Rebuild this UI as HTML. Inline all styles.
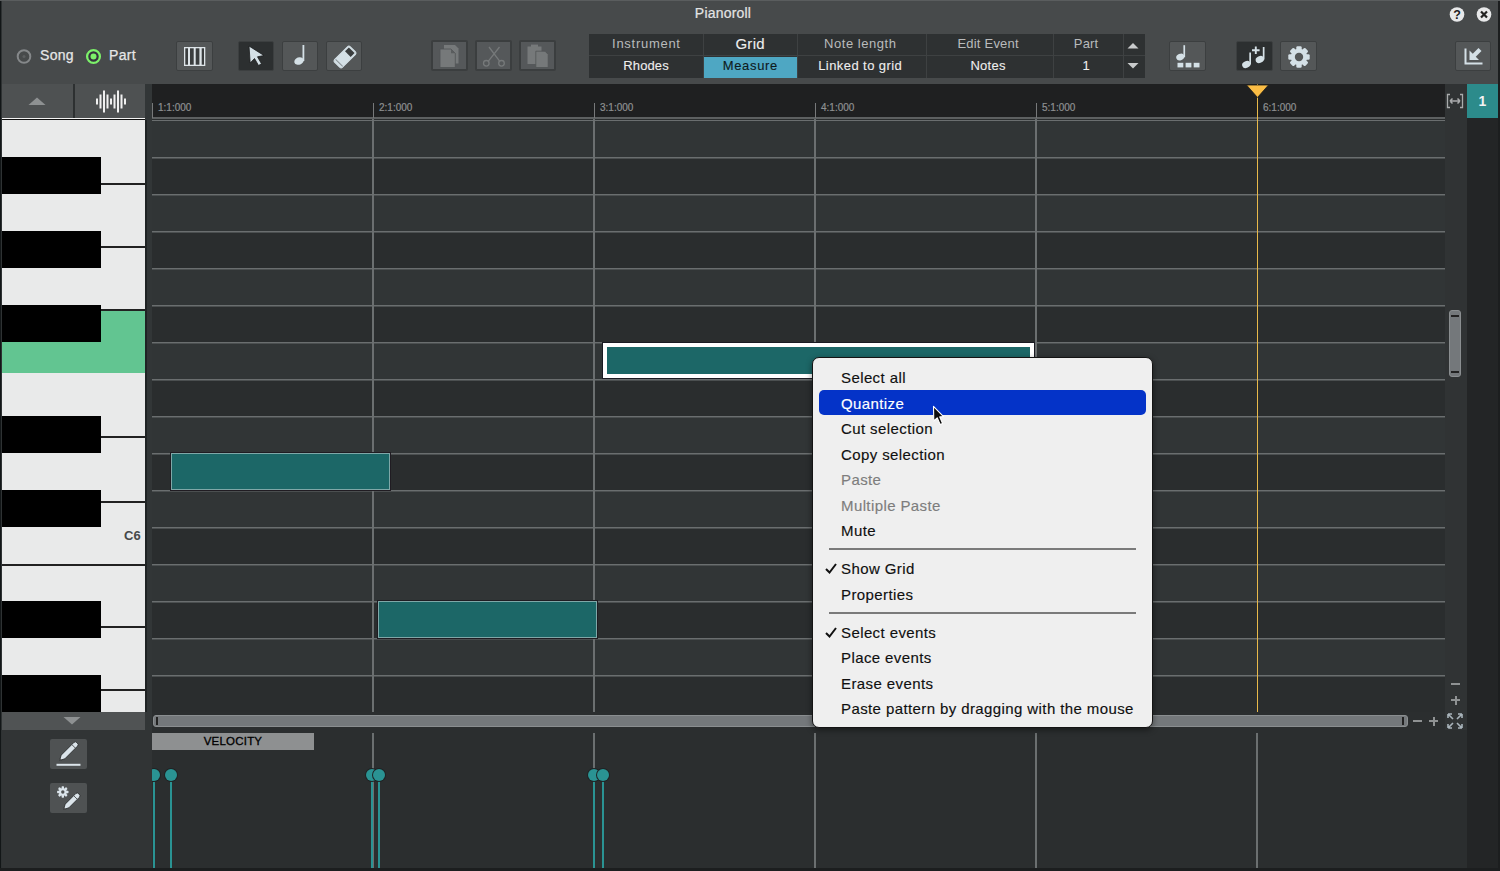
<!DOCTYPE html><html><head><meta charset="utf-8"><title>Pianoroll</title><style>

*{margin:0;padding:0;box-sizing:border-box}
html,body{width:1500px;height:871px;overflow:hidden;background:#474a4b;font-family:"Liberation Sans", sans-serif}
.abs{position:absolute}
.btn{position:absolute;background:#545758;border:1px solid #3c3f40;border-radius:2px}
.btn.on{background:#2c2f30}
.btn.dis{background:#55585a;border:2px solid #3b3e3f}
.mi{position:absolute;left:28px;font-size:15px;letter-spacing:0.4px;color:#111;white-space:nowrap;-webkit-text-stroke:0.15px currentColor}
.mi.g{color:#7b7b7b}

</style></head><body>
<div class="abs" style="left:0;top:0;width:1500px;height:871px;background:#474a4b"></div>
<div class="abs" style="left:0;top:0;width:1px;height:871px;background:#121617"></div>
<div class="abs" style="left:1px;top:0;width:1px;height:871px;background:#2e3233"></div>
<div class="abs" style="left:1498px;top:0;width:2px;height:871px;background:#1c1e1f"></div>
<div class="abs" style="left:0;top:0;width:1500px;height:1px;background:#5a5d5e"></div>
<div class="abs" style="left:0;top:5px;width:1446px;text-align:center;font-size:14px;letter-spacing:0.2px;color:#e4e4e4;-webkit-text-stroke:0.2px #e4e4e4">Pianoroll</div>
<svg class="abs" style="left:1449px;top:6px" width="44" height="17" viewBox="0 0 44 17">
<circle cx="8" cy="8.5" r="7.3" fill="#e8e9ea"/>
<text x="8" y="13.3" font-size="12.5" font-weight="bold" text-anchor="middle" fill="#1d1d1d" font-family="Liberation Sans">?</text>
<circle cx="35" cy="8.5" r="7.3" fill="#e8e9ea"/>
<path d="M32 5.5 L38 11.5 M38 5.5 L32 11.5" stroke="#222" stroke-width="2.2"/>
</svg>
<svg class="abs" style="left:14px;top:47px" width="90" height="20" viewBox="0 0 90 20">
<circle cx="10" cy="9.5" r="6.3" fill="none" stroke="#85888a" stroke-width="2"/><circle cx="10" cy="9.5" r="1.5" fill="#5c5f60"/>
<circle cx="79.5" cy="9.5" r="6.4" fill="#35323d" stroke="#7cf06a" stroke-width="2.3"/>
<circle cx="79.5" cy="9.5" r="3" fill="#7cf06a"/>
</svg>
<div class="abs" style="left:40px;top:47px;font-size:14px;letter-spacing:0.3px;color:#e6e6e6;-webkit-text-stroke:0.25px #e6e6e6">Song</div>
<div class="abs" style="left:109px;top:47px;font-size:14px;letter-spacing:0.3px;color:#e6e6e6;-webkit-text-stroke:0.25px #e6e6e6">Part</div>
<div class="btn " style="left:176px;top:41px;width:37px;height:30px"><svg class="abs" style="left:6px;top:4px" width="23" height="21" viewBox="0 0 23 21">
<rect x="1" y="1" width="21.3" height="19" fill="#dde4e8"/>
<rect x="2.3" y="2.3" width="2.7" height="16.4" fill="#3a3d3e"/><rect x="7" y="2.3" width="3.7" height="16.4" fill="#3a3d3e"/>
<rect x="12.7" y="2.3" width="3.7" height="16.4" fill="#3a3d3e"/><rect x="18.7" y="2.3" width="2.3" height="16.4" fill="#3a3d3e"/>
</svg></div>
<div class="btn on" style="left:238px;top:41px;width:36px;height:30px"><svg class="abs" style="left:9px;top:3px" width="18" height="22" viewBox="0 0 18 22">
<path d="M1 1 L2.2 18 L6.5 13.5 L10.5 20.5 L13.5 18.8 L9.5 11.8 L16 10.5 Z" fill="#d4e0e6" stroke="#1a1c1d" stroke-width="0.8"/>
</svg></div>
<div class="btn " style="left:282px;top:41px;width:36px;height:30px"><svg class="abs" style="left:10px;top:2px" width="16" height="22" viewBox="0 0 16 22">
<ellipse cx="6" cy="17" rx="4.8" ry="3.6" fill="#d4e0e6" transform="rotate(-20 6 17)"/>
<rect x="9.5" y="1" width="1.8" height="16" fill="#d4e0e6"/>
</svg></div>
<div class="btn " style="left:326px;top:41px;width:36px;height:30px"><svg class="abs" style="left:6px;top:3px" width="24" height="24" viewBox="0 0 24 24">
<g transform="rotate(-45 12 12)"><rect x="1" y="6.5" width="22" height="11" rx="2" fill="#d4e0e6" stroke="#d4e0e6" stroke-width="1"/>
<rect x="16" y="8" width="5.5" height="8" fill="#3a3d3e"/><rect x="3.2" y="7" width="1" height="10" fill="#8a9296"/></g>
</svg></div>
<div class="btn dis" style="left:431px;top:40px;width:37px;height:31px"></div>
<div class="btn dis" style="left:475px;top:40px;width:37px;height:31px"></div>
<div class="btn dis" style="left:519px;top:40px;width:37px;height:31px"></div>
<svg class="abs" style="left:420px;top:38px" width="140" height="34" viewBox="420 38 140 34">
<g fill="#76797a">
<path d="M444 45 H455 L458.5 48.5 V63.5 H444 Z"/>
<path d="M440 49 H451 L455.3 53.3 V67.5 H440 Z" stroke="#515455" stroke-width="0.8"/>
<path d="M451 49 V53.3 H455.3" fill="#5a5d5e"/>
</g>
<g stroke="#76797a" stroke-width="1.3" fill="none">
<path d="M489 47 L499.8 61.3 M499.5 47 L488.2 61.3"/>
<circle cx="486.3" cy="63.3" r="2.8"/><circle cx="501.5" cy="63.3" r="2.8"/>
</g>
<g fill="#76797a">
<rect x="527.5" y="46.5" width="14" height="17.5"/><rect x="531" y="44.6" width="7" height="3"/>
<path d="M535.8 51.2 H545 L548.2 54.4 V67.5 H535.8 Z" stroke="#515455" stroke-width="0.8"/>
</g>
</svg>
<div class="abs" style="left:589px;top:34px;width:556px;height:44px;background:#2e3132"></div>
<div class="abs" style="left:703px;top:34px;width:1px;height:44px;background:#3e4142"></div>
<div class="abs" style="left:797px;top:34px;width:1px;height:44px;background:#3e4142"></div>
<div class="abs" style="left:926px;top:34px;width:1px;height:44px;background:#3e4142"></div>
<div class="abs" style="left:1053px;top:34px;width:1px;height:44px;background:#3e4142"></div>
<div class="abs" style="left:1123px;top:34px;width:1px;height:44px;background:#3e4142"></div>
<div class="abs" style="left:589px;top:55px;width:556px;height:1px;background:#3e4142"></div>
<div class="abs" style="left:704px;top:57px;width:93px;height:21px;background:#4ea7c3"></div>
<div class="abs" style="left:576px;top:36px;width:140px;text-align:center;font-size:13px;color:#b9bbbc;white-space:nowrap;letter-spacing:0.72px;text-indent:0.72px;">Instrument</div>
<div class="abs" style="left:680px;top:35px;width:140px;text-align:center;font-size:15px;color:#eeeeee;white-space:nowrap;letter-spacing:0.3px;text-indent:0.3px;-webkit-text-stroke:0.1px #eee">Grid</div>
<div class="abs" style="left:790px;top:36px;width:140px;text-align:center;font-size:13px;color:#b9bbbc;white-space:nowrap;letter-spacing:0.55px;text-indent:0.55px;">Note length</div>
<div class="abs" style="left:918px;top:36px;width:140px;text-align:center;font-size:13px;color:#b9bbbc;white-space:nowrap;letter-spacing:0.22px;text-indent:0.22px;">Edit Event</div>
<div class="abs" style="left:1016px;top:36px;width:140px;text-align:center;font-size:13px;color:#b9bbbc;white-space:nowrap;letter-spacing:0.2px;text-indent:0.2px;">Part</div>
<div class="abs" style="left:576px;top:58px;width:140px;text-align:center;font-size:13px;color:#eeeeee;white-space:nowrap;letter-spacing:0.1px;text-indent:0.1px;-webkit-text-stroke:0.1px #eee">Rhodes</div>
<div class="abs" style="left:680px;top:58px;width:140px;text-align:center;font-size:13px;color:#0e1a20;white-space:nowrap;letter-spacing:0.68px;text-indent:0.68px;-webkit-text-stroke:0.1px #0e1a20">Measure</div>
<div class="abs" style="left:790px;top:58px;width:140px;text-align:center;font-size:13px;color:#eeeeee;white-space:nowrap;letter-spacing:0.43px;text-indent:0.43px;-webkit-text-stroke:0.1px #eee">Linked to grid</div>
<div class="abs" style="left:918px;top:58px;width:140px;text-align:center;font-size:13px;color:#eeeeee;white-space:nowrap;letter-spacing:0.3px;text-indent:0.3px;-webkit-text-stroke:0.1px #eee">Notes</div>
<div class="abs" style="left:1016px;top:58px;width:140px;text-align:center;font-size:13px;color:#eeeeee;white-space:nowrap;letter-spacing:0px;text-indent:0px;-webkit-text-stroke:0.1px #eee">1</div>
<svg class="abs" style="left:1126px;top:39px" width="14" height="34" viewBox="0 0 14 34">
<path d="M1.5 9.5 L7 4 L12.5 9.5 Z" fill="#c9cbcc"/><path d="M1.5 24 L7 29.5 L12.5 24 Z" fill="#c9cbcc"/>
</svg>
<div class="btn " style="left:1169px;top:41px;width:37px;height:30px"><svg class="abs" style="left:0px;top:0px" width="37" height="30" viewBox="1168 41 37 30">
<ellipse cx="1178.3" cy="56" rx="4.2" ry="3.2" fill="#d4e0e6" transform="rotate(-25 1178.3 56)"/>
<rect x="1181.4" y="44.2" width="1.7" height="12" fill="#d4e0e6"/>
<rect x="1175.5" y="61.8" width="5.8" height="4.6" fill="#d4e0e6"/><rect x="1183.6" y="61.8" width="5.8" height="4.6" fill="#d4e0e6"/><rect x="1191.7" y="61.8" width="5.8" height="4.6" fill="#d4e0e6"/>
</svg></div>
<div class="btn on" style="left:1236px;top:41px;width:37px;height:30px"><svg class="abs" style="left:0px;top:0px" width="37" height="30" viewBox="1237 41 37 30">
<ellipse cx="1246.3" cy="63.5" rx="4.3" ry="3.3" fill="#d4e0e6" transform="rotate(-25 1246.3 63.5)"/>
<rect x="1249.3" y="51.5" width="1.7" height="12" fill="#d4e0e6"/>
<ellipse cx="1259.8" cy="58.5" rx="4.3" ry="3.3" fill="#d4e0e6" transform="rotate(-25 1259.8 58.5)"/>
<rect x="1262.8" y="46" width="1.7" height="12.5" fill="#d4e0e6"/>
<path d="M1255.8 45.5 V53 M1252 49.3 H1259.6" stroke="#d4e0e6" stroke-width="1.9"/>
</svg></div>
<div class="btn " style="left:1280px;top:41px;width:37px;height:30px"><svg class="abs" style="left:7px;top:4px" width="22" height="22" viewBox="0 0 22 22">
<g fill="#d4e0e6"><circle cx="11" cy="11" r="8.2"/>
<rect x="8.3" y="0.3" width="5.4" height="21.4" rx="1.2"/><rect x="8.3" y="0.3" width="5.4" height="21.4" rx="1.2" transform="rotate(45 11 11)"/>
<rect x="8.3" y="0.3" width="5.4" height="21.4" rx="1.2" transform="rotate(90 11 11)"/><rect x="8.3" y="0.3" width="5.4" height="21.4" rx="1.2" transform="rotate(135 11 11)"/></g>
<circle cx="11" cy="11" r="4.2" fill="#545758"/>
</svg></div>
<div class="btn " style="left:1455px;top:41px;width:36px;height:30px"><svg class="abs" style="left:0px;top:0px" width="36" height="30" viewBox="1455 41 36 30">
<path d="M1464.5 47.5 V62.5 H1481.5" stroke="#d4e0e6" stroke-width="2" fill="none"/>
<path d="M1468.5 49.5 V59 H1478 Z" fill="#d4e0e6"/>
<path d="M1472 55.5 L1479 48.5" stroke="#d4e0e6" stroke-width="4.2"/>
</svg></div>
<div class="abs" style="left:2px;top:84px;width:143px;height:34px;background:#4e5152"></div>
<div class="abs" style="left:73px;top:84px;width:2px;height:34px;background:#2d3031"></div>
<svg class="abs" style="left:28px;top:96px" width="18" height="10" viewBox="0 0 18 10"><path d="M0.5 9 L9 1.5 L17.5 9 Z" fill="#8e9192"/></svg>
<svg class="abs" style="left:95px;top:89px" width="32" height="25" viewBox="0 0 32 25"><rect x="1" y="9.5" width="2" height="6" fill="#f0f0f0"/><rect x="4.5" y="5.5" width="2" height="14" fill="#f0f0f0"/><rect x="8" y="1.5" width="2" height="22" fill="#f0f0f0"/><rect x="11.5" y="5.5" width="2" height="14" fill="#f0f0f0"/><rect x="15" y="9.5" width="2" height="6" fill="#f0f0f0"/><rect x="18.5" y="5.5" width="2" height="14" fill="#f0f0f0"/><rect x="22" y="1.5" width="2" height="22" fill="#f0f0f0"/><rect x="25.5" y="5.5" width="2" height="14" fill="#f0f0f0"/><rect x="29" y="9.5" width="2" height="6" fill="#f0f0f0"/></svg>
<div class="abs" style="left:145px;top:84px;width:7px;height:646px;background:#323637"></div>
<div class="abs" style="left:145px;top:120px;width:2px;height:592px;background:#1f2324"></div>
<div class="abs" style="left:2px;top:118px;width:143px;height:2px;background:#f4f4f4"></div>
<div class="abs" style="left:2px;top:119px;width:143px;height:1px;background:#111"></div>
<div class="abs" style="left:2px;top:120px;width:143px;height:592px;background:#e9eaea;overflow:hidden">
<div class="abs" style="left:0;top:190px;width:143px;height:63px;background:#62c591"></div>
<div class="abs" style="left:99px;top:63px;width:44px;height:2px;background:#222"></div>
<div class="abs" style="left:99px;top:126px;width:44px;height:2px;background:#222"></div>
<div class="abs" style="left:99px;top:189px;width:44px;height:2px;background:#222"></div>
<div class="abs" style="left:99px;top:316px;width:44px;height:2px;background:#222"></div>
<div class="abs" style="left:99px;top:381px;width:44px;height:2px;background:#222"></div>
<div class="abs" style="left:99px;top:506px;width:44px;height:2px;background:#222"></div>
<div class="abs" style="left:99px;top:569px;width:44px;height:2px;background:#222"></div>
<div class="abs" style="left:0;top:444px;width:143px;height:2px;background:#222"></div>
<div class="abs" style="left:0;top:37px;width:99px;height:37px;background:#000"></div>
<div class="abs" style="left:0;top:111px;width:99px;height:37px;background:#000"></div>
<div class="abs" style="left:0;top:185px;width:99px;height:37px;background:#000"></div>
<div class="abs" style="left:0;top:296px;width:99px;height:37px;background:#000"></div>
<div class="abs" style="left:0;top:370px;width:99px;height:37px;background:#000"></div>
<div class="abs" style="left:0;top:481px;width:99px;height:37px;background:#000"></div>
<div class="abs" style="left:0;top:555px;width:99px;height:37px;background:#000"></div>
<div class="abs" style="left:122px;top:408px;font-size:13px;font-weight:bold;color:#46494a">C6</div>
</div>
<div class="abs" style="left:2px;top:712px;width:143px;height:18px;background:#505354"></div>
<svg class="abs" style="left:63px;top:716px" width="18" height="10" viewBox="0 0 18 10"><path d="M0.5 1 L9 8.5 L17.5 1 Z" fill="#8e9192"/></svg>
<div class="abs" style="left:152px;top:84px;width:1293px;height:34px;background:#1f2021"></div>
<div class="abs" style="left:152px;top:117px;width:1293px;height:2px;background:#5d6061"></div>
<div class="abs" style="left:152px;top:119px;width:1293px;height:1px;background:#1f2021"></div>
<div class="abs" style="left:152px;top:103px;width:1px;height:15px;background:#77797a"></div>
<div class="abs" style="left:158px;top:102px;font-size:10px;color:#8e9091;-webkit-text-stroke:0.2px #8e9091">1:1:000</div>
<div class="abs" style="left:373px;top:103px;width:1px;height:15px;background:#77797a"></div>
<div class="abs" style="left:379px;top:102px;font-size:10px;color:#8e9091;-webkit-text-stroke:0.2px #8e9091">2:1:000</div>
<div class="abs" style="left:594px;top:103px;width:1px;height:15px;background:#77797a"></div>
<div class="abs" style="left:600px;top:102px;font-size:10px;color:#8e9091;-webkit-text-stroke:0.2px #8e9091">3:1:000</div>
<div class="abs" style="left:815px;top:103px;width:1px;height:15px;background:#77797a"></div>
<div class="abs" style="left:821px;top:102px;font-size:10px;color:#8e9091;-webkit-text-stroke:0.2px #8e9091">4:1:000</div>
<div class="abs" style="left:1036px;top:103px;width:1px;height:15px;background:#77797a"></div>
<div class="abs" style="left:1042px;top:102px;font-size:10px;color:#8e9091;-webkit-text-stroke:0.2px #8e9091">5:1:000</div>
<div class="abs" style="left:1257px;top:103px;width:1px;height:15px;background:#77797a"></div>
<div class="abs" style="left:1263px;top:102px;font-size:10px;color:#8e9091;-webkit-text-stroke:0.2px #8e9091">6:1:000</div>
<div class="abs" style="left:152px;top:119px;width:1293px;height:593px;background:#2a2d2e;overflow:hidden">
<div class="abs" style="left:0;top:1px;width:1293px;height:37px;background:#313536"></div>
<div class="abs" style="left:0;top:38px;width:1293px;height:37px;background:#2a2d2e"></div>
<div class="abs" style="left:0;top:75px;width:1293px;height:37px;background:#313536"></div>
<div class="abs" style="left:0;top:112px;width:1293px;height:37px;background:#2a2d2e"></div>
<div class="abs" style="left:0;top:149px;width:1293px;height:37px;background:#313536"></div>
<div class="abs" style="left:0;top:186px;width:1293px;height:37px;background:#2a2d2e"></div>
<div class="abs" style="left:0;top:223px;width:1293px;height:37px;background:#313536"></div>
<div class="abs" style="left:0;top:260px;width:1293px;height:37px;background:#2a2d2e"></div>
<div class="abs" style="left:0;top:297px;width:1293px;height:37px;background:#313536"></div>
<div class="abs" style="left:0;top:334px;width:1293px;height:37px;background:#2a2d2e"></div>
<div class="abs" style="left:0;top:371px;width:1293px;height:37px;background:#313536"></div>
<div class="abs" style="left:0;top:408px;width:1293px;height:37px;background:#2a2d2e"></div>
<div class="abs" style="left:0;top:445px;width:1293px;height:37px;background:#313536"></div>
<div class="abs" style="left:0;top:482px;width:1293px;height:37px;background:#2a2d2e"></div>
<div class="abs" style="left:0;top:519px;width:1293px;height:37px;background:#313536"></div>
<div class="abs" style="left:0;top:556px;width:1293px;height:37px;background:#2a2d2e"></div>
<div class="abs" style="left:0;top:38px;width:1293px;height:1px;background:#6a6e6f"></div>
<div class="abs" style="left:0;top:39px;width:1293px;height:1px;background:#4b4f50"></div>
<div class="abs" style="left:0;top:75px;width:1293px;height:1px;background:#6a6e6f"></div>
<div class="abs" style="left:0;top:76px;width:1293px;height:1px;background:#4b4f50"></div>
<div class="abs" style="left:0;top:112px;width:1293px;height:1px;background:#6a6e6f"></div>
<div class="abs" style="left:0;top:113px;width:1293px;height:1px;background:#4b4f50"></div>
<div class="abs" style="left:0;top:149px;width:1293px;height:1px;background:#6a6e6f"></div>
<div class="abs" style="left:0;top:150px;width:1293px;height:1px;background:#4b4f50"></div>
<div class="abs" style="left:0;top:186px;width:1293px;height:1px;background:#6a6e6f"></div>
<div class="abs" style="left:0;top:187px;width:1293px;height:1px;background:#4b4f50"></div>
<div class="abs" style="left:0;top:223px;width:1293px;height:1px;background:#6a6e6f"></div>
<div class="abs" style="left:0;top:224px;width:1293px;height:1px;background:#4b4f50"></div>
<div class="abs" style="left:0;top:260px;width:1293px;height:1px;background:#6a6e6f"></div>
<div class="abs" style="left:0;top:261px;width:1293px;height:1px;background:#4b4f50"></div>
<div class="abs" style="left:0;top:297px;width:1293px;height:1px;background:#6a6e6f"></div>
<div class="abs" style="left:0;top:298px;width:1293px;height:1px;background:#4b4f50"></div>
<div class="abs" style="left:0;top:334px;width:1293px;height:1px;background:#6a6e6f"></div>
<div class="abs" style="left:0;top:335px;width:1293px;height:1px;background:#4b4f50"></div>
<div class="abs" style="left:0;top:371px;width:1293px;height:1px;background:#6a6e6f"></div>
<div class="abs" style="left:0;top:372px;width:1293px;height:1px;background:#4b4f50"></div>
<div class="abs" style="left:0;top:408px;width:1293px;height:1px;background:#6a6e6f"></div>
<div class="abs" style="left:0;top:409px;width:1293px;height:1px;background:#4b4f50"></div>
<div class="abs" style="left:0;top:445px;width:1293px;height:1px;background:#6a6e6f"></div>
<div class="abs" style="left:0;top:446px;width:1293px;height:1px;background:#4b4f50"></div>
<div class="abs" style="left:0;top:482px;width:1293px;height:1px;background:#6a6e6f"></div>
<div class="abs" style="left:0;top:483px;width:1293px;height:1px;background:#4b4f50"></div>
<div class="abs" style="left:0;top:519px;width:1293px;height:1px;background:#6a6e6f"></div>
<div class="abs" style="left:0;top:520px;width:1293px;height:1px;background:#4b4f50"></div>
<div class="abs" style="left:0;top:556px;width:1293px;height:1px;background:#6a6e6f"></div>
<div class="abs" style="left:0;top:557px;width:1293px;height:1px;background:#4b4f50"></div>
<div class="abs" style="left:0;top:1px;width:1293px;height:1px;background:#6a6e6f"></div>
<div class="abs" style="left:220px;top:0;width:2px;height:593px;background:#6b6f70"></div>
<div class="abs" style="left:441px;top:0;width:2px;height:593px;background:#6b6f70"></div>
<div class="abs" style="left:662px;top:0;width:2px;height:593px;background:#6b6f70"></div>
<div class="abs" style="left:883px;top:0;width:2px;height:593px;background:#6b6f70"></div>
<div class="abs" style="left:19px;top:334px;width:219px;height:37px;background:#1c6767;border:1px solid #7fa8a8;box-shadow:0 0 0 1px #201c22"></div>
<div class="abs" style="left:226px;top:482px;width:219px;height:37px;background:#1c6767;border:1px solid #7fa8a8;box-shadow:0 0 0 1px #201c22"></div>
<div class="abs" style="left:451px;top:224px;width:431px;height:35px;background:#1c6767;border:4px solid #ffffff;box-shadow:0 0 0 1px #1a1a22"></div>
<div class="abs" style="left:1105px;top:0;width:1px;height:593px;background:#e8b94a"></div>
</div>
<div class="abs" style="left:1257px;top:84px;width:1px;height:35px;background:#e8b94a"></div>
<svg class="abs" style="left:1245px;top:84px" width="25" height="15" viewBox="0 0 25 15"><path d="M1.5 1 L23.5 1 L12.5 13.5 Z" fill="#fbbd45" stroke="#1a1a1a" stroke-width="0.8"/></svg>
<div class="abs" style="left:1445px;top:84px;width:22px;height:646px;background:#303334"></div>
<svg class="abs" style="left:1446px;top:93px" width="18" height="16" viewBox="0 0 18 16">
<path d="M4 1.5 H1.5 V14.5 H4 M14 1.5 H16.5 V14.5 H14" stroke="#a9abac" stroke-width="1.3" fill="none"/>
<path d="M4 8 H14 M4 8 L6.5 5.5 M4 8 L6.5 10.5 M14 8 L11.5 5.5 M14 8 L11.5 10.5" stroke="#a9abac" stroke-width="1.5" fill="none"/>
</svg>
<div class="abs" style="left:1449px;top:310px;width:12px;height:67px;background:#74787b;border:1px solid #8a8e90;border-radius:3px"></div>
<div class="abs" style="left:1451px;top:315px;width:8px;height:2px;background:#222"></div>
<div class="abs" style="left:1451px;top:371px;width:8px;height:2px;background:#222"></div>
<div class="abs" style="left:1451px;top:683px;width:9px;height:2px;background:#8f9293"></div>
<div class="abs" style="left:1451px;top:699px;width:9px;height:2px;background:#8f9293"></div>
<div class="abs" style="left:1454.5px;top:695.5px;width:2px;height:9px;background:#8f9293"></div>
<div class="abs" style="left:1467px;top:84px;width:31px;height:787px;background:#232526"></div>
<div class="abs" style="left:1467px;top:84px;width:31px;height:34px;background:#2c8b8b"></div>
<div class="abs" style="left:1467px;top:93px;width:31px;text-align:center;font-size:14px;font-weight:bold;color:#f2f2f2">1</div>
<div class="abs" style="left:152px;top:712px;width:1293px;height:18px;background:#2b2e2f"></div>
<div class="abs" style="left:153px;top:715px;width:1255px;height:12px;background:#74787b;border:1px solid #8a8e90;border-radius:3px"></div>
<div class="abs" style="left:156px;top:717px;width:2px;height:8px;background:#222"></div>
<div class="abs" style="left:1402px;top:717px;width:2px;height:8px;background:#222"></div>
<div class="abs" style="left:1413px;top:720px;width:9px;height:2px;background:#8f9293"></div>
<div class="abs" style="left:1429px;top:720px;width:9px;height:2px;background:#8f9293"></div>
<div class="abs" style="left:1432.5px;top:716.5px;width:2px;height:9px;background:#8f9293"></div>
<svg class="abs" style="left:1447px;top:713px" width="16" height="16" viewBox="0 0 16 16">
<g stroke="#a9b4bb" stroke-width="1.6" fill="none"><path d="M1 1 L6 6 M1 1 H5 M1 1 V5"/><path d="M15 1 L10 6 M15 1 H11 M15 1 V5"/>
<path d="M1 15 L6 10 M1 15 H5 M1 15 V11"/><path d="M15 15 L10 10 M15 15 H11 M15 15 V11"/></g></svg>
<div class="abs" style="left:2px;top:730px;width:150px;height:138px;background:#313435"></div>
<div class="btn" style="left:50px;top:739px;width:37px;height:30px;border:none;background:#4f5253"></div>
<svg class="abs" style="left:50px;top:739px" width="37" height="30" viewBox="50 739 37 30"><g transform="translate(59.5 760.5) rotate(-45)"><path d="M0 0 L5 -2.6 H23 Q25 -2.6 25 0 Q25 2.6 23 2.6 H5 Z" fill="#dbe4ea" stroke="#2a2d2e" stroke-width="0.8"/><path d="M0 0 L2.2 -1.1 V1.1 Z" fill="#555"/><path d="M20 -2.6 V2.6" stroke="#4f5253" stroke-width="0.9"/></g><rect x="56.5" y="763.8" width="24" height="2" fill="#dbe4ea"/></svg>
<div class="btn" style="left:50px;top:783px;width:37px;height:30px;border:none;background:#4f5253"></div>
<svg class="abs" style="left:50px;top:783px" width="37" height="30" viewBox="50 783 37 30"><g fill="#dbe4ea"><circle cx="62.8" cy="792" r="3.8"/><rect x="61.6" y="786.3" width="2.4" height="11.4" rx="0.6" transform="rotate(0 62.8 792)"/><rect x="61.6" y="786.3" width="2.4" height="11.4" rx="0.6" transform="rotate(45 62.8 792)"/><rect x="61.6" y="786.3" width="2.4" height="11.4" rx="0.6" transform="rotate(90 62.8 792)"/><rect x="61.6" y="786.3" width="2.4" height="11.4" rx="0.6" transform="rotate(135 62.8 792)"/></g><circle cx="62.8" cy="792" r="1.7" fill="#4f5253"/><g transform="translate(63.5 809.5) rotate(-45)"><path d="M0 0 L5 -2.6 H20 Q22 -2.6 22 0 Q22 2.6 20 2.6 H5 Z" fill="#dbe4ea" stroke="#2a2d2e" stroke-width="0.8"/><path d="M0 0 L2.2 -1.1 V1.1 Z" fill="#555"/><path d="M17 -2.6 V2.6" stroke="#4f5253" stroke-width="0.9"/></g></svg>
<div class="abs" style="left:152px;top:730px;width:1315px;height:138px;background:#2b2e2f;overflow:hidden">
<div class="abs" style="left:220px;top:3px;width:2px;height:135px;background:#6b6f70"></div>
<div class="abs" style="left:441px;top:3px;width:2px;height:135px;background:#6b6f70"></div>
<div class="abs" style="left:662px;top:3px;width:2px;height:135px;background:#6b6f70"></div>
<div class="abs" style="left:883px;top:3px;width:2px;height:135px;background:#6b6f70"></div>
<div class="abs" style="left:1104px;top:3px;width:2px;height:135px;background:#6b6f70"></div>
<div class="abs" style="left:0;top:3px;width:162px;height:17px;background:#8e9091"></div>
<div class="abs" style="left:0;top:5px;width:162px;text-align:center;font-size:11.5px;letter-spacing:0.2px;color:#000;-webkit-text-stroke:0.3px #000">VELOCITY</div>
<div class="abs" style="left:1px;top:45px;width:2px;height:93px;background:#2a9393"></div>
<div class="abs" style="left:-4px;top:39px;width:12px;height:12px;border-radius:50%;background:#2a9393;box-shadow:0 0 0 1px #1f2324"></div>
<div class="abs" style="left:18px;top:45px;width:2px;height:93px;background:#2a9393"></div>
<div class="abs" style="left:13px;top:39px;width:12px;height:12px;border-radius:50%;background:#2a9393;box-shadow:0 0 0 1px #1f2324"></div>
<div class="abs" style="left:219px;top:45px;width:2px;height:93px;background:#2a9393"></div>
<div class="abs" style="left:214px;top:39px;width:12px;height:12px;border-radius:50%;background:#2a9393;box-shadow:0 0 0 1px #1f2324"></div>
<div class="abs" style="left:226px;top:45px;width:2px;height:93px;background:#2a9393"></div>
<div class="abs" style="left:221px;top:39px;width:12px;height:12px;border-radius:50%;background:#2a9393;box-shadow:0 0 0 1px #1f2324"></div>
<div class="abs" style="left:441px;top:45px;width:2px;height:93px;background:#2a9393"></div>
<div class="abs" style="left:436px;top:39px;width:12px;height:12px;border-radius:50%;background:#2a9393;box-shadow:0 0 0 1px #1f2324"></div>
<div class="abs" style="left:450px;top:45px;width:2px;height:93px;background:#2a9393"></div>
<div class="abs" style="left:445px;top:39px;width:12px;height:12px;border-radius:50%;background:#2a9393;box-shadow:0 0 0 1px #1f2324"></div>
</div>
<div class="abs" style="left:0;top:868px;width:1500px;height:3px;background:#1c1e1f"></div>
<div class="abs" style="left:812px;top:357px;width:341px;height:371px;background:#efefef;border:1px solid #141414;border-radius:7px;box-shadow:0 2px 6px rgba(0,0,0,0.45)">
<div class="abs" style="left:6px;top:32px;width:327px;height:25px;background:#0433c8;border-radius:5px"></div>
<div class="mi" style="top:11.0px;color:#101010">Select all</div>
<div class="mi" style="top:36.5px;color:#ffffff">Quantize</div>
<div class="mi" style="top:62.0px;color:#101010">Cut selection</div>
<div class="mi" style="top:87.5px;color:#101010">Copy selection</div>
<div class="mi" style="top:113.0px;color:#7d7d7d">Paste</div>
<div class="mi" style="top:138.5px;color:#7d7d7d">Multiple Paste</div>
<div class="mi" style="top:164.0px;color:#101010">Mute</div>
<div class="mi" style="top:202.0px;color:#101010">Show Grid</div>
<svg class="abs" style="left:12px;top:205.0px" width="12" height="11" viewBox="0 0 12 11"><path d="M1 6 L4.5 9.5 L11 1" stroke="#111" stroke-width="2" fill="none"/></svg>
<div class="mi" style="top:227.5px;color:#101010">Properties</div>
<div class="mi" style="top:265.5px;color:#101010">Select events</div>
<svg class="abs" style="left:12px;top:268.5px" width="12" height="11" viewBox="0 0 12 11"><path d="M1 6 L4.5 9.5 L11 1" stroke="#111" stroke-width="2" fill="none"/></svg>
<div class="mi" style="top:291.0px;color:#101010">Place events</div>
<div class="mi" style="top:316.5px;color:#101010">Erase events</div>
<div class="mi" style="top:342.0px;color:#101010">Paste pattern by dragging with the mouse</div>
<div class="abs" style="left:16px;top:190px;width:307px;height:2px;background:#7a7a7a"></div>
<div class="abs" style="left:16px;top:254px;width:307px;height:2px;background:#7a7a7a"></div>
</div>
<svg class="abs" style="left:925px;top:400px" width="25" height="30" viewBox="925 400 25 30">
<path d="M933.5 406.3 L933.8 421 L937.2 417.8 L940.2 424.6 L942.6 423.5 L939.7 416.9 L943.5 416.6 Z" fill="#0c0c0c" stroke="#ffffff" stroke-width="1.1" stroke-linejoin="round"/></svg>
</body></html>
